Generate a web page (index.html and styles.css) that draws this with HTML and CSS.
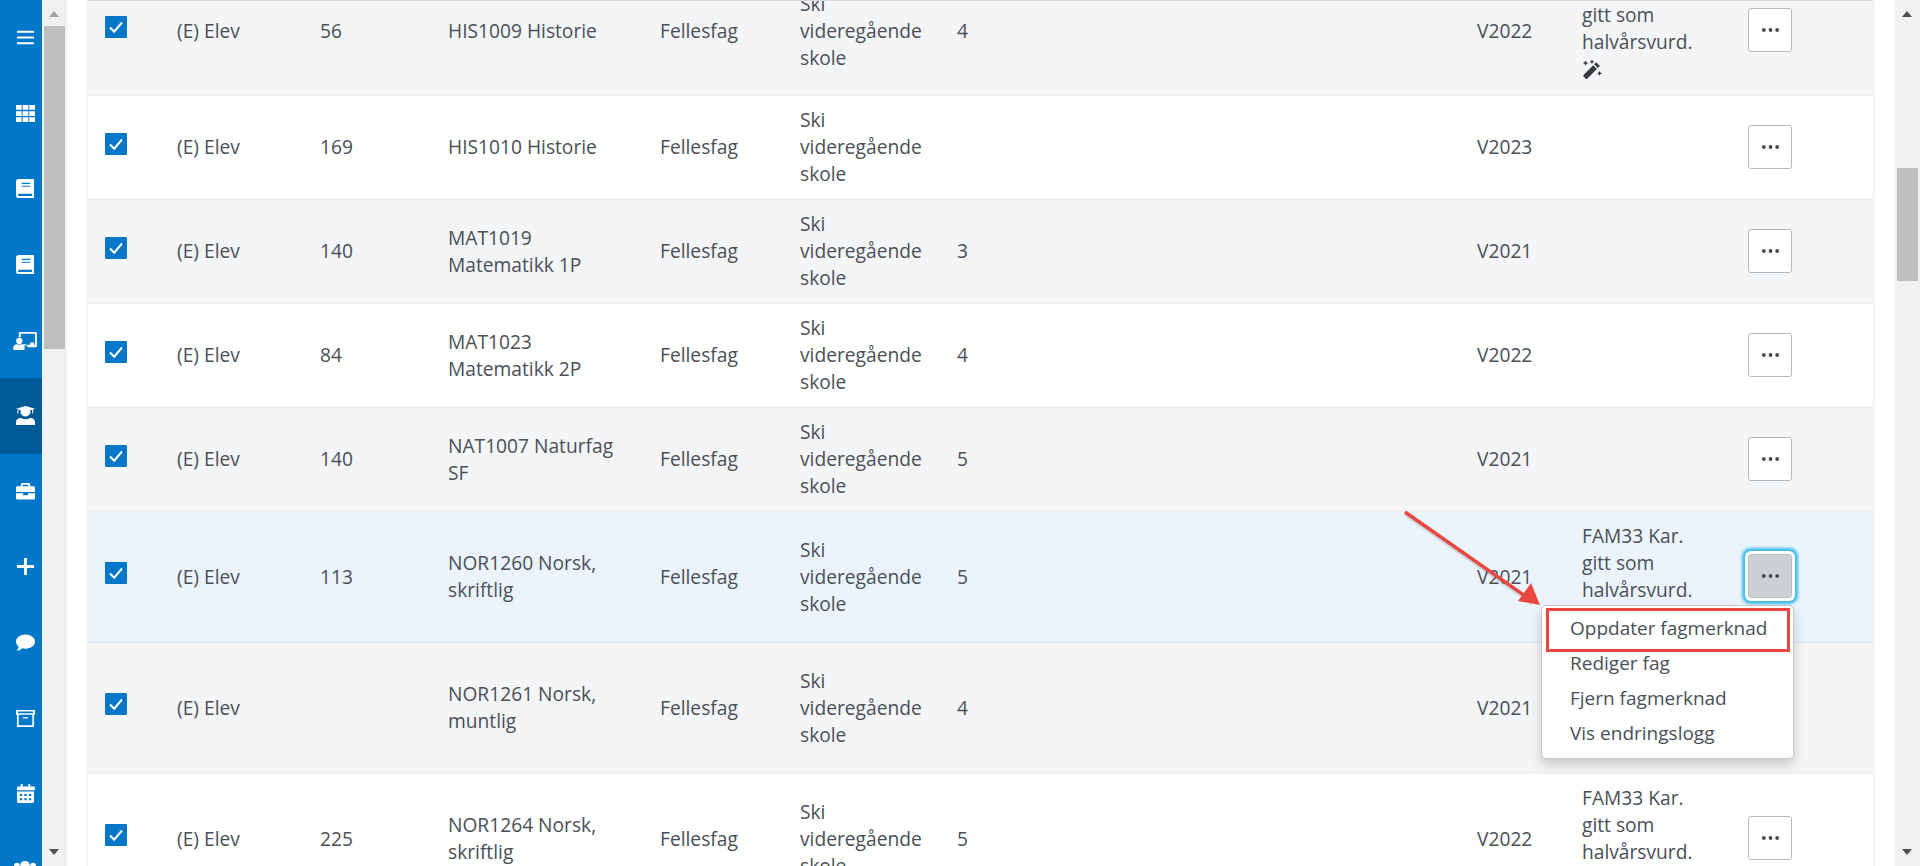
FILE: index.html
```html
<!DOCTYPE html>
<html lang="no">
<head>
<meta charset="utf-8">
<title>Fag</title>
<link rel="stylesheet" href="styles.css">
</head>
<body>
<div class="page">
  <nav class="sidebar">
    <a class="nav-item"><svg class="ico" viewBox="0 0 20 20"><path d="M1 3h18v2H1zM1 9h18v2H1zM1 15h18v2H1z"/></svg></a>
    <a class="nav-item"><svg class="ico" viewBox="0 0 20 20"><path d="M0 1h6v5H0zM7 1h6v5H7zM14 1h6v5h-6zM0 7.500h6v5H0zM7 7.500h6v5H7zM14 7.500h6v5h-6zM0 14h6v5H0zM7 14h6v5H7zM14 14h6v5h-6z"/></svg></a>
    <a class="nav-item"><svg class="ico" viewBox="0 0 20 20"><path fill-rule="evenodd" d="M3 0h15a1 1 0 0 1 1 1v19H3a2.600 2.600 0 0 1-3-3V3a3 3 0 0 1 3-3zM6 4v1.200h9V4zM6 7v1.200h9V7zM3 15.500a1.300 1.300 0 0 0 0 2.500h14v-2.500z"/></svg></a>
    <a class="nav-item"><svg class="ico" viewBox="0 0 20 20"><path fill-rule="evenodd" d="M3 0h15a1 1 0 0 1 1 1v19H3a2.600 2.600 0 0 1-3-3V3a3 3 0 0 1 3-3zM6 4v1.200h9V4zM6 7v1.200h9V7zM3 15.500a1.300 1.300 0 0 0 0 2.500h14v-2.500z"/></svg></a>
    <a class="nav-item"><svg class="ico ico-wide" viewBox="0 0 25 20"><path d="M7 1h17a1 1 0 0 1 1 1v14a1 1 0 0 1-1 1h-9v-2.500h3V12h4v2.500h1V3H8v3.500H6V2a1 1 0 0 1 1-1z"/><circle cx="6.500" cy="10.500" r="3.300"/><path d="M0 19c0-3.500 2-5 4-5 1.600.7 3.400.7 5 0h4c1 0 2 1 1.500 2.200L13.500 15H12v5H1a1 1 0 0 1-1-1z"/></svg></a>
    <a class="nav-item is-active"><svg class="ico" viewBox="0 0 20 20"><path d="M10 0l10 3-2 .6V8h-1V3.900l-2 .6a5.200 5.200 0 1 1-10 0L0 3z"/><path d="M1.500 4h1v4h-1z"/><path d="M0 20v-3c0-2.500 2-4.500 5-4.500 3 1.800 7 1.800 10 0 3 0 5 2 5 4.500v3z"/></svg></a>
    <a class="nav-item"><svg class="ico" viewBox="0 0 20 20"><path fill-rule="evenodd" d="M7 1h6a2 2 0 0 1 2 2v1.500h3.500A1.500 1.500 0 0 1 20 6v4.500H0V6a1.500 1.500 0 0 1 1.500-1.500H5V3a2 2 0 0 1 2-2zm0 2v1.500h6V3z"/><path d="M0 11.800h7.500V14h5v-2.200H20V17a1.500 1.500 0 0 1-1.500 1.500h-17A1.500 1.500 0 0 1 0 17z"/></svg></a>
    <a class="nav-item"><svg class="ico" viewBox="0 0 20 20"><path d="M8.500 1h3v7.500H19v3h-7.500V19h-3v-7.500H1v-3h7.500z"/></svg></a>
    <a class="nav-item"><svg class="ico" viewBox="0 0 20 20"><path d="M10 1.500c5.500 0 10 3.400 10 7.500s-4.500 7.500-10 7.500c-1.200 0-2.400-.2-3.400-.5C5 17.300 3 18.500.6 18.500c1.300-1.300 2-2.800 2.200-4.300C1 12.900 0 11 0 9c0-4.100 4.500-7.500 10-7.500z"/></svg></a>
    <a class="nav-item"><svg class="ico" viewBox="0 0 20 20"><path fill-rule="evenodd" d="M0 1h20v5h-1v13H1V6H0zm2 1.500V4.500h16V2.500zM2.800 6v11.200h14.400V6zM7.500 8.500h5v1.500h-5z"/></svg></a>
    <a class="nav-item"><svg class="ico" viewBox="0 0 20 20"><path fill-rule="evenodd" d="M5 0h2v2.500h6V0h2v2.500h3.500A1.500 1.500 0 0 1 20 4v2.500H1V4a1.500 1.500 0 0 1 1.500-1.500H5zM1 8h18v10.500a1.500 1.500 0 0 1-1.500 1.500h-15A1.500 1.500 0 0 1 1 18.500zm3 2.500v2h2.500v-2zm4.700 0v2h2.500v-2zm4.800 0v2H16v-2zM4 15v2h2.500v-2zm4.700 0v2h2.500v-2zm4.800 0v2H16v-2z"/></svg></a>
    <a class="nav-item"><svg class="ico ico-wide" viewBox="0 0 25 20"><circle cx="12.500" cy="6" r="5"/><circle cx="4" cy="6" r="3"/><circle cx="21" cy="6" r="3"/><path d="M4 20c0-5 3-8 8.500-8s8.500 3 8.500 8z"/></svg></a>
  </nav>

  <div class="scrollbar scrollbar-left">
    <span class="arrow arrow-up arrow-muted"></span>
    <span class="thumb thumb-left"></span>
    <span class="arrow arrow-down"></span>
  </div>

  <main class="content">
    <table class="subjects">
      <colgroup>
        <col class="c-check"><col class="c-role"><col class="c-num"><col class="c-code"><col class="c-type"><col class="c-school"><col class="c-grade"><col class="c-term"><col class="c-note"><col class="c-action">
      </colgroup>
      <tbody>
        <tr class="alt first">
          <td class="cell-check"><span class="check"><svg viewBox="0 0 22 22"><path d="M5 11.500l4.200 4.200L17 6.500"/></svg></span></td>
          <td>(E) Elev</td><td>56</td><td>HIS1009 Historie</td><td>Fellesfag</td><td>Ski videregående skole</td><td>4</td><td>V2022</td>
          <td class="cell-note">FAM33 Kar. gitt som halvårsvurd.<span class="note-line"><svg class="wand" viewBox="0 0 20 20"><path d="M14.200 3.300l3.700 3.700-2 2-3.700-3.700z"/><path d="M11.200 6.300l3.700 3.700L5.500 19.400a1.400 1.400 0 0 1-2 0L1.800 17.700a1.400 1.400 0 0 1 0-2z"/><path d="M3.500 1.500l.9 1.700 1.700.9-1.700.9-.9 1.700-.9-1.700-1.700-.9 1.700-.9zM10 .5l.8 1.400 1.400.8-1.400.8-.8 1.400-.8-1.400-1.400-.8 1.400-.8zM17.500 12l.9 1.500 1.500.9-1.500.9-.9 1.500-.9-1.500-1.500-.9 1.500-.9z"/></svg></span></td>
          <td><button class="more" type="button"><svg viewBox="0 0 20 6"><circle cx="3" cy="3" r="2"/><circle cx="10" cy="3" r="2"/><circle cx="17" cy="3" r="2"/></svg></button></td>
        </tr>
        <tr>
          <td class="cell-check"><span class="check"><svg viewBox="0 0 22 22"><path d="M5 11.500l4.200 4.200L17 6.500"/></svg></span></td>
          <td>(E) Elev</td><td>169</td><td>HIS1010 Historie</td><td>Fellesfag</td><td>Ski videregående skole</td><td></td><td>V2023</td><td class="cell-note"></td>
          <td><button class="more" type="button"><svg viewBox="0 0 20 6"><circle cx="3" cy="3" r="2"/><circle cx="10" cy="3" r="2"/><circle cx="17" cy="3" r="2"/></svg></button></td>
        </tr>
        <tr class="alt">
          <td class="cell-check"><span class="check"><svg viewBox="0 0 22 22"><path d="M5 11.500l4.200 4.200L17 6.500"/></svg></span></td>
          <td>(E) Elev</td><td>140</td><td>MAT1019 Matematikk 1P</td><td>Fellesfag</td><td>Ski videregående skole</td><td>3</td><td>V2021</td><td class="cell-note"></td>
          <td><button class="more" type="button"><svg viewBox="0 0 20 6"><circle cx="3" cy="3" r="2"/><circle cx="10" cy="3" r="2"/><circle cx="17" cy="3" r="2"/></svg></button></td>
        </tr>
        <tr>
          <td class="cell-check"><span class="check"><svg viewBox="0 0 22 22"><path d="M5 11.500l4.200 4.200L17 6.500"/></svg></span></td>
          <td>(E) Elev</td><td>84</td><td>MAT1023 Matematikk 2P</td><td>Fellesfag</td><td>Ski videregående skole</td><td>4</td><td>V2022</td><td class="cell-note"></td>
          <td><button class="more" type="button"><svg viewBox="0 0 20 6"><circle cx="3" cy="3" r="2"/><circle cx="10" cy="3" r="2"/><circle cx="17" cy="3" r="2"/></svg></button></td>
        </tr>
        <tr class="alt">
          <td class="cell-check"><span class="check"><svg viewBox="0 0 22 22"><path d="M5 11.500l4.200 4.200L17 6.500"/></svg></span></td>
          <td>(E) Elev</td><td>140</td><td>NAT1007 Naturfag SF</td><td>Fellesfag</td><td>Ski videregående skole</td><td>5</td><td>V2021</td><td class="cell-note"></td>
          <td><button class="more" type="button"><svg viewBox="0 0 20 6"><circle cx="3" cy="3" r="2"/><circle cx="10" cy="3" r="2"/><circle cx="17" cy="3" r="2"/></svg></button></td>
        </tr>
        <tr class="selected">
          <td class="cell-check"><span class="check"><svg viewBox="0 0 22 22"><path d="M5 11.500l4.200 4.200L17 6.500"/></svg></span></td>
          <td>(E) Elev</td><td>113</td><td>NOR1260 Norsk, skriftlig</td><td>Fellesfag</td><td>Ski videregående skole</td><td>5</td><td>V2021</td>
          <td class="cell-note">FAM33 Kar. gitt som halvårsvurd.<span class="note-line"></span></td>
          <td><button class="more is-open" type="button"><svg viewBox="0 0 20 6"><circle cx="3" cy="3" r="2"/><circle cx="10" cy="3" r="2"/><circle cx="17" cy="3" r="2"/></svg></button></td>
        </tr>
        <tr class="alt">
          <td class="cell-check"><span class="check"><svg viewBox="0 0 22 22"><path d="M5 11.500l4.200 4.200L17 6.500"/></svg></span></td>
          <td>(E) Elev</td><td></td><td>NOR1261 Norsk, muntlig</td><td>Fellesfag</td><td>Ski videregående skole</td><td>4</td><td>V2021</td>
          <td class="cell-note">FAM33 Kar. gitt som halvårsvurd.<span class="note-line"></span></td>
          <td><button class="more" type="button"><svg viewBox="0 0 20 6"><circle cx="3" cy="3" r="2"/><circle cx="10" cy="3" r="2"/><circle cx="17" cy="3" r="2"/></svg></button></td>
        </tr>
        <tr>
          <td class="cell-check"><span class="check"><svg viewBox="0 0 22 22"><path d="M5 11.500l4.200 4.200L17 6.500"/></svg></span></td>
          <td>(E) Elev</td><td>225</td><td>NOR1264 Norsk, skriftlig</td><td>Fellesfag</td><td>Ski videregående skole</td><td>5</td><td>V2022</td>
          <td class="cell-note">FAM33 Kar. gitt som halvårsvurd.<span class="note-line"></span></td>
          <td><button class="more" type="button"><svg viewBox="0 0 20 6"><circle cx="3" cy="3" r="2"/><circle cx="10" cy="3" r="2"/><circle cx="17" cy="3" r="2"/></svg></button></td>
        </tr>
      </tbody>
    </table>
  </main>

  <div class="scrollbar scrollbar-right">
    <span class="arrow arrow-up"></span>
    <span class="thumb thumb-right"></span>
    <span class="arrow arrow-down"></span>
  </div>

  <ul class="menu">
    <li class="menu-item">Oppdater fagmerknad</li>
    <li class="menu-item">Rediger fag</li>
    <li class="menu-item">Fjern fagmerknad</li>
    <li class="menu-item">Vis endringslogg</li>
    <li class="mark"></li>
  </ul>

  <svg class="pointer" viewBox="0 0 145 105"><path class="pointer-shadow" d="M5 9L132 98"/><path class="pointer-line" d="M5 7L128 93"/><path class="pointer-head" d="M140 100L118 96L131 78z"/></svg>
</div>
</body>
</html>
```

FILE: styles.css
```css
* { box-sizing: border-box; }

html, body { margin: 0; height: 100%; overflow: hidden; }

body {
  font-family: "Open Sans", "Noto Sans", sans-serif;
  font-size: 19px;
  line-height: 27px;
  color: #495057;
  background: #fff;
}

.page {
  position: relative;
  display: flex;
  height: 866px;
  overflow: hidden;
}

/* Sidebar */
.sidebar {
  flex: 0 0 42px;
  display: flex;
  flex-direction: column;
  background: #0077c8;
  overflow: hidden;
}

.nav-item {
  flex: 0 0 75.6px;
  display: flex;
  align-items: center;
  justify-content: center;
  padding-left: 8px;
}

.nav-item.is-active { background: #005a96; }

.ico { width: 19px; height: 19px; fill: #fff; }
.ico-wide { width: 24px; }

/* Scrollbars */
.scrollbar {
  position: relative;
  flex: 0 0 25px;
  display: flex;
  flex-direction: column;
  background: #f1f1f1;
}

.thumb {
  display: block;
  margin: 0 2px;
  background: #bfbfbf;
}

.thumb-left { margin-top: 26px; height: 323px; }
.thumb-right { margin-top: 168px; height: 113px; }

.arrow {
  position: absolute;
  left: 7px;
  width: 0;
  height: 0;
  border-left: 5.5px solid transparent;
  border-right: 5.5px solid transparent;
}

.arrow-up { top: 11px; border-bottom: 6px solid #505050; }
.arrow-up.arrow-muted { border-bottom-color: #a3a3a3; }
.arrow-down { bottom: 11px; border-top: 6px solid #505050; }

/* Content */
.content {
  flex: 1 1 auto;
  min-width: 0;
  padding: 0 22px 0 21px;
  overflow: hidden;
  background: #fff;
}

.subjects {
  width: 1785px;
  margin-top: -37px;
  border-collapse: separate;
  border-spacing: 0;
  table-layout: fixed;
  font-size: 19.2px;
  box-shadow: 0 0 3px rgba(0, 0, 0, .14);
}

.content::before {
  content: "";
  position: absolute;
  z-index: 1;
  top: 0;
  left: 88px;
  width: 1785px;
  height: 1px;
  background: #d9dbde;
}

.c-check { width: 77px; }
.c-role { width: 143px; }
.c-num { width: 128px; }
.c-code { width: 212px; }
.c-type { width: 140px; }
.c-school { width: 157px; }
.c-grade { width: 520px; }
.c-term { width: 105px; }
.c-note { width: 166px; }
.c-action { width: 137px; }

.subjects td {
  padding: 10px 12px 11px;
  vertical-align: middle;
  border-bottom: 2px solid #eff0f2;
  overflow: visible;
}

.subjects tr.first td { padding-top: 11px; padding-bottom: 8px; }

.subjects tr.alt td { background: #f4f5f7; }
.subjects tr.selected td { background: #ebf4fd; border-bottom-color: #e4ebf2; }

.subjects td.cell-check { padding-left: 17px; padding-right: 0; }

.subjects td.cell-note { padding-right: 24px; }

.note-line { display: block; height: 27px; }

.wand { display: block; width: 20px; height: 20px; margin-top: 4px; fill: #343a40; }

.check {
  display: block;
  width: 22px;
  height: 22px;
  margin-bottom: 6px;
  background: #0077c8;
  border-radius: 1px;
}

.check svg { display: block; width: 22px; height: 22px; }

.check path {
  fill: none;
  stroke: #fff;
  stroke-width: 2;
}

.more {
  display: flex;
  align-items: center;
  justify-content: center;
  width: 44px;
  height: 44px;
  padding: 0;
  background: #fff;
  border: 1px solid #b4b9be;
  border-radius: 3px;
}

.more svg { width: 19px; height: 6px; fill: #454b50; }

.more.is-open {
  background: #cdd0d3;
  border-color: #bcc0c4;
  box-shadow: 0 0 0 3px #fff, 0 0 3px 6px #3fbde8;
}

/* Context menu */
.menu {
  position: absolute;
  z-index: 3;
  top: 605px;
  left: 1541px;
  width: 253px;
  height: 154px;
  margin: 0;
  padding: 5px 0 7px;
  list-style: none;
  background: #fff;
  border: 1px solid #c6c9cc;
  border-radius: 5px;
  box-shadow: 0 6px 12px rgba(0, 0, 0, .18);
}

.menu-item {
  height: 35px;
  padding: 4px 28px;
  white-space: nowrap;
}

.mark {
  position: absolute;
  top: 2px;
  left: 4px;
  width: 244px;
  height: 44px;
  border: 3px solid #e8483f;
}

/* Annotation arrow */
.pointer {
  position: absolute;
  z-index: 4;
  top: 505px;
  left: 1400px;
  width: 145px;
  height: 105px;
  overflow: visible;
}

.pointer-shadow { fill: none; stroke: rgba(0, 0, 0, .12); stroke-width: 4; }
.pointer-line { fill: none; stroke: #e8483f; stroke-width: 3.5; }
.pointer-head { fill: #e8483f; }
```
